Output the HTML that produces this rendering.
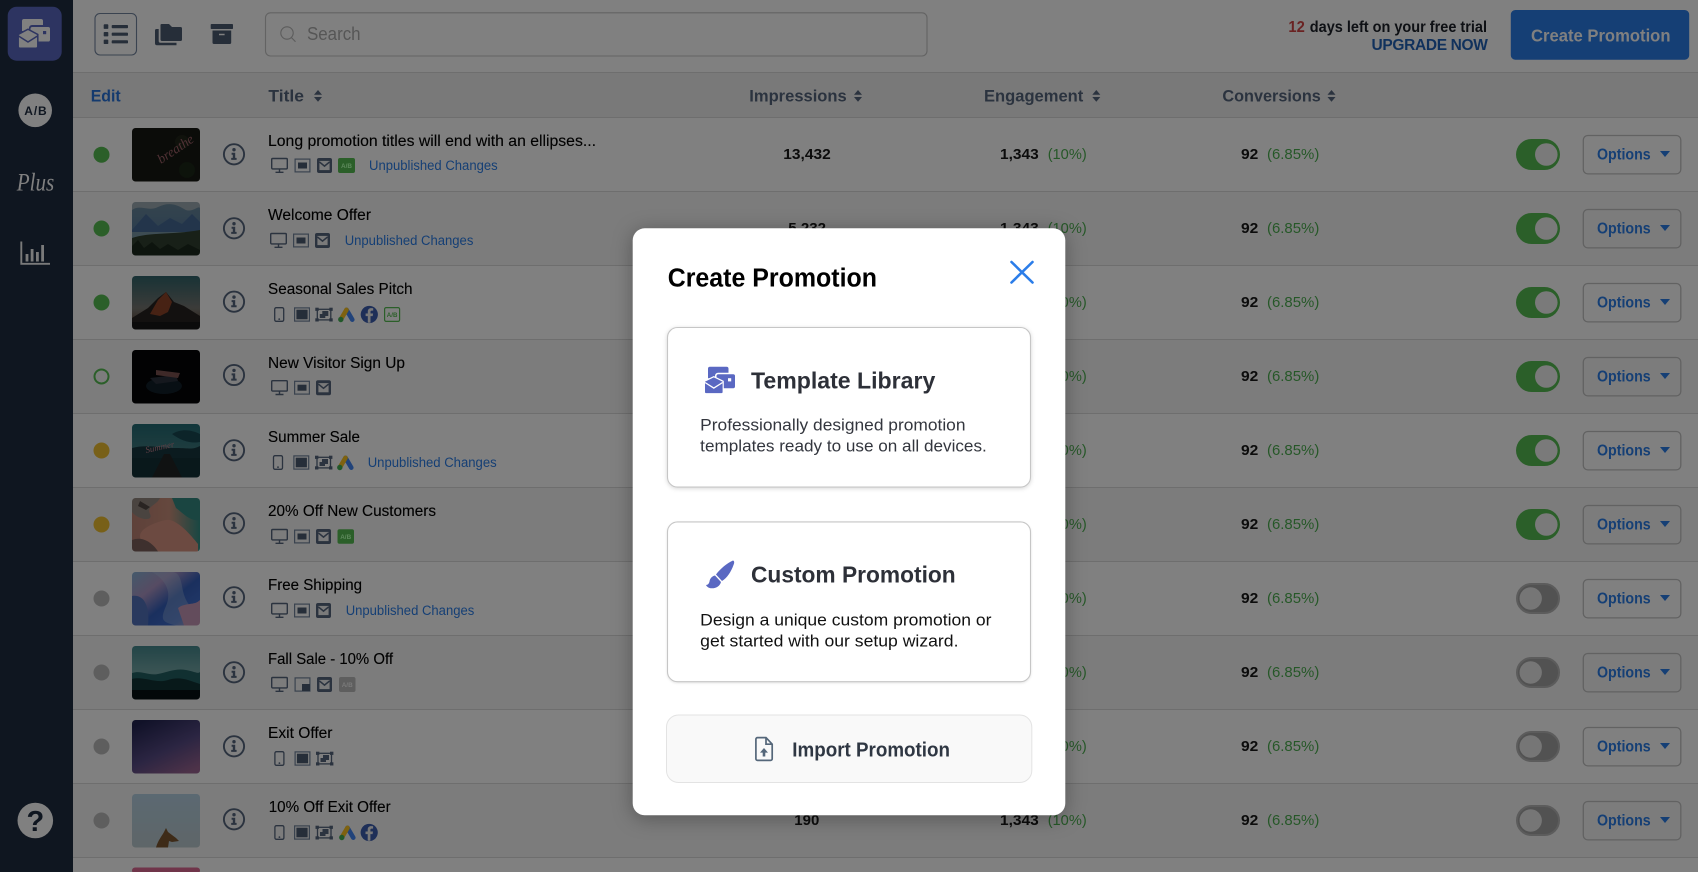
<!DOCTYPE html>
<html lang="en">
<head>
<meta charset="utf-8">
<title>Create Promotion</title>
<style>
html,body{margin:0;padding:0;width:1698px;height:872px;overflow:hidden;background:#808080}
svg{display:block}
text{font-family:"Liberation Sans",Arial,sans-serif}
g[clip-path]{filter:brightness(.56)}
.ti{font-size:15.5px;fill:#000;stroke:#000;stroke-width:.12px;transform:translateY(-.5px)}
.un{font-size:13.5px;fill:#153f75}
.hd{font-size:16.5px;font-weight:700;fill:#2b333f}
.nm{font-size:15px;font-weight:700;fill:#0c0c0c}
.gr{font-size:15px;fill:#265828}
.op{font-size:15.5px;font-weight:700;fill:#153f75;transform:translateY(-.8px)}
.ab{font-size:6.5px;font-weight:700}
.mh{font-size:23.5px;font-weight:700;fill:#2d3038}
.md{font-size:17px;fill:#33363e;transform:translateX(-.5px)}
</style>
</head>
<body>
<svg xmlns="http://www.w3.org/2000/svg" width="1698" height="872" viewBox="0 0 1698 872">
<defs>
<clipPath id="tc"><rect width="68" height="53.5" rx="3.5"/></clipPath>
<linearGradient id="g1" x1="0" y1="0" x2="0" y2="1"><stop offset="0" stop-color="#5f7a8c"/><stop offset=".5" stop-color="#50708c"/><stop offset="1" stop-color="#2a3c36"/></linearGradient>
<linearGradient id="g2" x1="0" y1="0" x2="0" y2="1"><stop offset="0" stop-color="#2c5a60"/><stop offset=".6" stop-color="#6a6a66"/><stop offset="1" stop-color="#4a3020"/></linearGradient>
<linearGradient id="g4" x1="0" y1="0" x2="0" y2="1"><stop offset="0" stop-color="#1f6068"/><stop offset=".55" stop-color="#3a6e72"/><stop offset="1" stop-color="#12363c"/></linearGradient>
<linearGradient id="g5" x1="0" y1="0" x2="1" y2="0"><stop offset="0" stop-color="#a87468"/><stop offset=".55" stop-color="#b5806e"/><stop offset="1" stop-color="#2c7e76"/></linearGradient>
<linearGradient id="g6" x1="0" y1="0" x2="1" y2="1"><stop offset="0" stop-color="#7aa0c0"/><stop offset=".3" stop-color="#9a86b0"/><stop offset=".55" stop-color="#2f55a8"/><stop offset=".8" stop-color="#3a62b8"/><stop offset="1" stop-color="#b884a4"/></linearGradient>
<linearGradient id="g7" x1="0" y1="0" x2="0" y2="1"><stop offset="0" stop-color="#3e7c80"/><stop offset=".5" stop-color="#6a9696"/><stop offset="1" stop-color="#2a5a5c"/></linearGradient>
<linearGradient id="g8" x1=".2" y1="0" x2=".8" y2="1"><stop offset="0" stop-color="#1e2048"/><stop offset=".55" stop-color="#4d4276"/><stop offset="1" stop-color="#8a5a82"/></linearGradient>
<linearGradient id="g9" x1="0" y1="0" x2="0" y2="1"><stop offset="0" stop-color="#a3bbcb"/><stop offset="1" stop-color="#a8b6ba"/></linearGradient>
<g id="mon" fill="none" stroke="#2b333f" stroke-width="1.4"><rect x=".7" y="-7" width="15.6" height="10.4" rx="1"/><path d="M8.5 3.5V6.5M4.5 6.8H12.5"/></g>
<g id="sq"><rect x=".6" y="-6.4" width="14.8" height="12.8" fill="none" stroke="#3a434f" stroke-width="1.2"/><rect x="3.5" y="-3" width="9" height="6" fill="#262e39"/></g>
<g id="fs"><rect x=".6" y="-6.6" width="14.8" height="13.2" fill="none" stroke="#3a434f" stroke-width="1.2"/><rect x="2.4" y="-4.8" width="11.2" height="9.6" fill="#262e39"/></g>
<g id="cs"><rect x=".6" y="-6.6" width="14.8" height="13.2" fill="none" stroke="#3a434f" stroke-width="1.2"/><rect x="7.5" y="-.5" width="8" height="7" fill="#262e39"/></g>
<g id="env"><rect y="-7.5" width="15" height="15" rx="2" fill="#2b333f"/><rect x="2.4" y="-4.6" width="10.2" height="9.2" fill="#7a7a7a"/><path d="M2.4-3.6 7.5 .6 12.6-3.6" fill="none" stroke="#2b333f" stroke-width="1.5"/></g>
<g id="ph"><rect x=".7" y="-6.8" width="9" height="13.6" rx="1.5" fill="none" stroke="#2b333f" stroke-width="1.3"/><circle cx="5.2" cy="4.6" r=".9" fill="#2b333f"/></g>
<g id="ex"><rect x="2" y="-5.2" width="13.5" height="10.6" fill="none" stroke="#2b333f" stroke-width="1.3"/><rect x="0" y="-6.8" width="3.4" height="3.2" fill="#2b333f"/><rect x="14" y="-6.8" width="3.4" height="3.2" fill="#2b333f"/><rect x="0" y="3.8" width="3.4" height="3.2" fill="#2b333f"/><rect x="14" y="3.8" width="3.4" height="3.2" fill="#2b333f"/><path d="M7-3.5H13V1.5H10V3.5H4.5V-.5H7Z" fill="#2b333f"/></g>
<g id="ads"><path d="M8.5-4.7 14.3 5.2" stroke="#21437a" stroke-width="4.6" stroke-linecap="round" fill="none"/><path d="M8.5-4.7 3.5 3.8" stroke="#7e6210" stroke-width="4.6" stroke-linecap="round" fill="none"/><circle cx="2.8" cy="5" r="2.7" fill="#22582a"/></g>
<g id="fb"><circle cx="8.6" cy="0" r="8.6" fill="#1e2f58"/><path d="M9.8 8.2V1.6H12L12.4-1H9.8V-2.6C9.8-3.4 10-3.9 11.1-3.9H12.5V-6.3C12.2-6.3 11.4-6.4 10.5-6.4 8.5-6.4 7.1-5.2 7.1-3V-1H4.9V1.6H7.1V8.2Z" fill="#787878"/></g>
<g id="sort" fill="#2b333f"><path d="M0 4.7 4 0 8 4.7ZM0 7H8L4 11.7Z"/></g>
<g id="info"><circle r="10.1" fill="none" stroke="#2b333f" stroke-width="1.9"/><circle cy="-4.6" r="1.7" fill="#2b333f"/><path d="M-2.4-1.6H1.2V3.6H2.6V5.6H-2.8V3.6H-1.2V.4H-2.4Z" fill="#2b333f"/></g>
<g id="on"><rect x="1516" y="21.5" width="44" height="31" rx="15.5" fill="#2b5f29"/><circle cx="1546.3" cy="37" r="11.3" fill="#7a7a7a"/></g>
<g id="off"><rect x="1517" y="22.5" width="42" height="29" rx="14.5" fill="#525252" stroke="#5c5c5c" stroke-width="2"/><circle cx="1530.7" cy="37" r="11.2" fill="#767676"/></g>
<g id="btn"><rect x="1583.3" y="18" width="97.5" height="38.4" rx="4.5" fill="none" stroke="#626262" stroke-width="1.3"/><path d="M1660 33.5H1670L1665 39.5Z" fill="#153f75"/></g>
</defs>

<!-- page background -->
<rect width="1698" height="872" fill="#808080"/>
<rect x="73" y="72" width="1625" height="45.5" fill="#797979"/>
<rect x="73" y="191.5" width="1625" height="74" fill="#7c7c7c"/>
<rect x="73" y="339.5" width="1625" height="74" fill="#7c7c7c"/>
<rect x="73" y="487.5" width="1625" height="74" fill="#7c7c7c"/>
<rect x="73" y="635.5" width="1625" height="74" fill="#7c7c7c"/>
<rect x="73" y="783.5" width="1625" height="74" fill="#7c7c7c"/>
<g stroke="#6e6e6e" stroke-width="1">
<path d="M73 72.5H1698M73 117.5H1698M73 191.5H1698M73 265.5H1698M73 339.5H1698M73 413.5H1698M73 487.5H1698M73 561.5H1698M73 635.5H1698M73 709.5H1698M73 783.5H1698M73 857.5H1698"/>
</g>

<!-- sidebar -->
<rect width="73" height="872" fill="#0f1620"/>
<rect x="7.7" y="6.7" width="54" height="54" rx="9" fill="#2d3461"/>
<g transform="translate(19,19)">
<path d="M5 0H22a2 2 0 0 1 2 2V6H13a3 3 0 0 0-3 3v3H3V2A2 2 0 0 1 5 0Z" fill="#808080"/>
<rect x="11.5" y="8" width="19.5" height="14.5" rx="1.8" fill="#808080"/>
<rect x="24" y="12" width="3.2" height="3.2" fill="#2d3461"/>
<path d="M-.8 15.4 9 10.2 18.8 15.4V27.5a1.7 1.7 0 0 1-1.7 1.7H.9A1.7 1.7 0 0 1-.8 27.5Z" fill="#808080" stroke="#2d3461" stroke-width="1.5"/>
<path d="M-.5 17 9 23 18.5 17" fill="none" stroke="#2d3461" stroke-width="1.5"/>
</g>
<circle cx="35.2" cy="110.3" r="16.8" fill="#808080"/>
<text x="24.3" y="115" style="font-size:12px;font-weight:700;fill:#0f1620" textLength="22.4" lengthAdjust="spacing">A/B</text>
<text x="16.7" y="190.5" style="font-family:'Liberation Serif',serif;font-style:italic;font-size:25px;fill:#808080" textLength="37.6" lengthAdjust="spacingAndGlyphs">Plus</text>
<g fill="none" stroke="#7a7a7a" stroke-width="1.9"><path d="M21.3 241.5V263.8H50"/></g>
<g fill="#7a7a7a"><rect x="25.6" y="254" width="2.8" height="7.5"/><rect x="30.7" y="249" width="2.8" height="12.5"/><rect x="36" y="252" width="2.8" height="9.5"/><rect x="41.2" y="245" width="2.8" height="16.5"/></g>
<circle cx="35.3" cy="820.5" r="17.8" fill="#808080"/>
<text x="35.3" y="831" text-anchor="middle" style="font-size:29px;font-weight:700;fill:#0f1620">?</text>

<!-- top bar -->
<rect x="95" y="13.5" width="41.5" height="41.5" rx="5" fill="none" stroke="#3a4350" stroke-width="1.1"/>
<g fill="#262e39">
<rect x="103.7" y="24.3" width="4.6" height="4.6" rx=".8"/><rect x="103.7" y="32" width="4.6" height="4.4" rx=".8"/><rect x="103.7" y="39.6" width="4.6" height="4.4" rx=".8"/>
<rect x="111.7" y="25" width="16.3" height="3.2" rx=".8"/><rect x="111.7" y="32.6" width="16.3" height="3.2" rx=".8"/><rect x="111.7" y="40.2" width="16.3" height="3.2" rx=".8"/>
<path d="M161.5 24H169L172 27H180.5A1.5 1.5 0 0 1 182 28.5V39.5A1.5 1.5 0 0 1 180.5 41H162A1.5 1.5 0 0 1 160.5 39.5V25A1 1 0 0 1 161.5 24Z"/>
<path d="M155 30.5A1.5 1.5 0 0 1 156.5 29H158.7V41A1.8 1.8 0 0 0 160.5 42.8H176.5V45.2H157A2 2 0 0 1 155 43.2Z"/>
<rect x="210.7" y="24" width="22.3" height="5" rx=".8"/>
<path d="M212.5 30.5H231.2V42.5A1.5 1.5 0 0 1 229.7 44H214A1.5 1.5 0 0 1 212.5 42.5ZM219 33.8V35.2H224.6V33.8Z" fill-rule="evenodd"/>
</g>
<rect x="265.5" y="12.8" width="661.5" height="43.2" rx="5" fill="none" stroke="#636363" stroke-width="1.1"/>
<circle cx="287" cy="33" r="6.2" fill="none" stroke="#5c5c5c" stroke-width="1.1"/><path d="M291.5 37.6 295.5 41.8" stroke="#5c5c5c" stroke-width="1.1"/>
<text x="307" y="40" style="font-size:18px;fill:#565656" textLength="53.6" lengthAdjust="spacingAndGlyphs">Search</text>
<text x="1288.4" y="32" style="font-size:15.5px;font-weight:700;fill:#6a2222" textLength="16.4" lengthAdjust="spacingAndGlyphs">12</text>
<text x="1309.8" y="32" style="font-size:15.5px;font-weight:700;fill:#0e1014" textLength="177.2" lengthAdjust="spacingAndGlyphs">days left on your free trial</text>
<text x="1371.5" y="50" style="font-size:15.5px;font-weight:700;fill:#10315c" textLength="116.4" lengthAdjust="spacing">UPGRADE NOW</text>
<rect x="1510.8" y="10" width="178.4" height="49.7" rx="4.5" fill="#153f75"/>
<text x="1531" y="41.3" style="font-size:17.5px;font-weight:700;fill:#808080" textLength="139.5" lengthAdjust="spacingAndGlyphs">Create Promotion</text>

<!-- table header -->
<text x="90.7" y="101.6" style="font-size:17px;font-weight:700;fill:#143a6e" textLength="30" lengthAdjust="spacingAndGlyphs">Edit</text>
<text x="268.4" y="101.6" class="hd" textLength="35.6" lengthAdjust="spacingAndGlyphs">Title</text>
<use href="#sort" x="314" y="90"/>
<text x="749.3" y="101.6" class="hd" textLength="97.4" lengthAdjust="spacingAndGlyphs">Impressions</text>
<use href="#sort" x="854" y="90"/>
<text x="984" y="101.6" class="hd" textLength="99.3" lengthAdjust="spacingAndGlyphs">Engagement</text>
<use href="#sort" x="1092.3" y="90"/>
<text x="1222.4" y="101.6" class="hd" textLength="98.4" lengthAdjust="spacingAndGlyphs">Conversions</text>
<use href="#sort" x="1327.5" y="90"/>

<!-- row 0 -->
<g transform="translate(0,117.5)">
<circle cx="101.5" cy="37.2" r="8" fill="#2b5f29"/>
<g transform="translate(132,10.5)" clip-path="url(#tc)"><rect width="68" height="53.5" fill="#141510"/><circle cx="50" cy="14" r="7" fill="#1c2016"/><circle cx="55" cy="42" r="8" fill="#172213"/><text x="0" y="0" transform="translate(29,36) rotate(-34)" style="font-family:'Liberation Serif',serif;font-style:italic;font-size:13.5px;fill:#8f585e">breathe</text></g>
<use href="#info" x="234" y="36.8"/>
<text x="268" y="29" class="ti" textLength="328" lengthAdjust="spacingAndGlyphs">Long promotion titles will end with an ellipses...</text>
<g transform="translate(0,48)"><use href="#mon" x="271"/><use href="#sq" x="294.5"/><use href="#env" x="317"/><rect x="338" y="-7.5" width="17" height="15" rx="2" fill="#2b5f29"/><text x="341" y="2.3" class="ab" style="fill:#5e8a5c" textLength="11" lengthAdjust="spacingAndGlyphs">A/B</text><text x="369" y="4.7" class="un" textLength="128.7" lengthAdjust="spacingAndGlyphs">Unpublished Changes</text></g>
<text x="783.3" y="41.3" class="nm" textLength="47.4" lengthAdjust="spacingAndGlyphs">13,432</text>
<text x="1000" y="41.3" class="nm" textLength="38.7" lengthAdjust="spacingAndGlyphs">1,343</text><text x="1047.7" y="41.3" class="gr" textLength="39" lengthAdjust="spacingAndGlyphs">(10%)</text>
<text x="1241" y="41.3" class="nm" textLength="17.3" lengthAdjust="spacingAndGlyphs">92</text><text x="1267" y="41.3" class="gr" textLength="52.3" lengthAdjust="spacingAndGlyphs">(6.85%)</text>
<use href="#on"/><use href="#btn"/><text x="1597" y="42.8" class="op" textLength="53.7" lengthAdjust="spacingAndGlyphs">Options</text>
</g>

<!-- row 1 -->
<g transform="translate(0,191.5)">
<circle cx="101.5" cy="37" r="8" fill="#2b5f29"/>
<g transform="translate(132,10.5)" clip-path="url(#tc)"><rect width="68" height="53.5" fill="url(#g1)"/><path d="M0 8C8 2 16 10 26 5S44 2 52 7 66 3 68 6V0H0Z" fill="#8d9aa0"/><path d="M0 28 14 12 26 24 38 16 50 22 60 12 68 20V40H0Z" fill="#3e5f86"/><path d="M0 30H68V36H0Z" fill="#6d8895"/><path d="M0 36C18 30 40 33 68 28V53.5H0Z" fill="#2b3a2a"/><path d="M0 53.5V44L6 38 12 46 20 40 28 47 36 42 46 48 56 42 68 48V53.5Z" fill="#182419"/></g>
<use href="#info" x="234" y="36.8"/>
<text x="268" y="29" class="ti" textLength="103" lengthAdjust="spacingAndGlyphs">Welcome Offer</text>
<g transform="translate(0,49)"><use href="#mon" x="270"/><use href="#sq" x="293"/><use href="#env" x="315"/><text x="344.7" y="4.7" class="un" textLength="128.7" lengthAdjust="spacingAndGlyphs">Unpublished Changes</text></g>
<text x="788.3" y="41.3" class="nm" textLength="37.7" lengthAdjust="spacingAndGlyphs">5,232</text>
<text x="1000" y="41.3" class="nm" textLength="38.7" lengthAdjust="spacingAndGlyphs">1,343</text><text x="1047.7" y="41.3" class="gr" textLength="39" lengthAdjust="spacingAndGlyphs">(10%)</text>
<text x="1241" y="41.3" class="nm" textLength="17.3" lengthAdjust="spacingAndGlyphs">92</text><text x="1267" y="41.3" class="gr" textLength="52.3" lengthAdjust="spacingAndGlyphs">(6.85%)</text>
<use href="#on"/><use href="#btn"/><text x="1597" y="42.8" class="op" textLength="53.7" lengthAdjust="spacingAndGlyphs">Options</text>
</g>

<!-- row 2 -->
<g transform="translate(0,265.5)">
<circle cx="101.5" cy="37" r="8" fill="#2b5f29"/>
<g transform="translate(132,10.5)" clip-path="url(#tc)"><rect width="68" height="53.5" fill="url(#g2)"/><path d="M0 42 16 32 26 22 34 16 42 26 52 30 68 40V53.5H0Z" fill="#221e1c"/><path d="M26 24 34 16 40 26 36 36 28 40 18 38Z" fill="#7f3c24"/><rect y="46" width="68" height="8" fill="#141414"/></g>
<use href="#info" x="234" y="36.2"/>
<text x="268" y="29" class="ti" textLength="144.5" lengthAdjust="spacingAndGlyphs">Seasonal Sales Pitch</text>
<g transform="translate(0,49)"><use href="#ph" x="274"/><use href="#fs" x="294"/><use href="#ex" x="315.3"/><use href="#ads" x="338"/><use href="#fb" x="360.7"/><rect x="384.6" y="-6.9" width="15" height="13.8" rx="1.5" fill="none" stroke="#2b5f29" stroke-width="1.2"/><text x="386.8" y="2.3" class="ab" style="fill:#2b5f29" textLength="10.6" lengthAdjust="spacingAndGlyphs">A/B</text></g>
<text x="1000" y="41.3" class="nm" textLength="38.7" lengthAdjust="spacingAndGlyphs">1,343</text><text x="1047.7" y="41.3" class="gr" textLength="39" lengthAdjust="spacingAndGlyphs">(10%)</text>
<text x="1241" y="41.3" class="nm" textLength="17.3" lengthAdjust="spacingAndGlyphs">92</text><text x="1267" y="41.3" class="gr" textLength="52.3" lengthAdjust="spacingAndGlyphs">(6.85%)</text>
<use href="#on"/><use href="#btn"/><text x="1597" y="42.8" class="op" textLength="53.7" lengthAdjust="spacingAndGlyphs">Options</text>
</g>

<!-- row 3 -->
<g transform="translate(0,339.5)">
<circle cx="101.5" cy="37" r="7" fill="none" stroke="#2b5f29" stroke-width="2"/>
<g transform="translate(132,10.5)" clip-path="url(#tc)"><rect width="68" height="53.5" fill="#030305"/><ellipse cx="32" cy="36" rx="18" ry="8" fill="#0e1a24"/><path d="M18 28 44 25 46 31 24 34Z" fill="#252b36"/><path d="M24 20 48 23 46 28 24 25Z" fill="#6e4a48"/></g>
<use href="#info" x="234" y="35.5"/>
<text x="268" y="29" class="ti" textLength="137" lengthAdjust="spacingAndGlyphs">New Visitor Sign Up</text>
<g transform="translate(0,48.2)"><use href="#mon" x="271"/><use href="#sq" x="294"/><use href="#env" x="316"/></g>
<text x="1000" y="41.3" class="nm" textLength="38.7" lengthAdjust="spacingAndGlyphs">1,343</text><text x="1047.7" y="41.3" class="gr" textLength="39" lengthAdjust="spacingAndGlyphs">(10%)</text>
<text x="1241" y="41.3" class="nm" textLength="17.3" lengthAdjust="spacingAndGlyphs">92</text><text x="1267" y="41.3" class="gr" textLength="52.3" lengthAdjust="spacingAndGlyphs">(6.85%)</text>
<use href="#on"/><use href="#btn"/><text x="1597" y="42.8" class="op" textLength="53.7" lengthAdjust="spacingAndGlyphs">Options</text>
</g>

<!-- row 4 -->
<g transform="translate(0,413.5)">
<circle cx="101.5" cy="37" r="8" fill="#786018"/>
<g transform="translate(132,10.5)" clip-path="url(#tc)"><rect width="68" height="53.5" fill="url(#g4)"/><path d="M40 10C50 4 60 6 68 10V18C58 20 48 16 40 10Z" fill="#15404a"/><path d="M0 24C14 20 30 24 44 24S60 26 68 22V34H0Z" fill="#143038"/><rect y="34" width="68" height="20" fill="#102a30"/><path d="M32 30H38L50 53.5H20Z" fill="#1c2020"/><text transform="translate(14,29) rotate(-12)" style="font-family:'Liberation Serif',serif;font-style:italic;font-size:9px;fill:#a8707c">Summer</text></g>
<use href="#info" x="234" y="36.8"/>
<text x="268" y="29" class="ti" textLength="92" lengthAdjust="spacingAndGlyphs">Summer Sale</text>
<g transform="translate(0,49)"><use href="#ph" x="272.8"/><use href="#fs" x="293.3"/><use href="#ex" x="315"/><use href="#ads" x="337"/><text x="367.7" y="4.7" class="un" textLength="129" lengthAdjust="spacingAndGlyphs">Unpublished Changes</text></g>
<text x="1000" y="41.3" class="nm" textLength="38.7" lengthAdjust="spacingAndGlyphs">1,343</text><text x="1047.7" y="41.3" class="gr" textLength="39" lengthAdjust="spacingAndGlyphs">(10%)</text>
<text x="1241" y="41.3" class="nm" textLength="17.3" lengthAdjust="spacingAndGlyphs">92</text><text x="1267" y="41.3" class="gr" textLength="52.3" lengthAdjust="spacingAndGlyphs">(6.85%)</text>
<use href="#on"/><use href="#btn"/><text x="1597" y="42.8" class="op" textLength="53.7" lengthAdjust="spacingAndGlyphs">Options</text>
</g>

<!-- row 5 -->
<g transform="translate(0,487.5)">
<circle cx="101.5" cy="37" r="8" fill="#786018"/>
<g transform="translate(132,10.5)" clip-path="url(#tc)"><rect width="68" height="53.5" fill="url(#g5)"/><path d="M0 0H28C24 8 14 8 18 16S6 22 0 14Z" fill="#857a72"/><path d="M8 3 18 9 14 12 6 8Z" fill="#4a403c"/><path d="M34 22C44 20 58 36 66 46V53.5H30C18 53.5 8 46 8 38S24 24 34 22Z" fill="#c08474"/><path d="M0 42C10 38 20 44 26 53.5H0Z" fill="#6e5652"/><path d="M40 0H68V22C58 24 50 14 44 10Z" fill="#2f7c74"/></g>
<use href="#info" x="234" y="35.8"/>
<text x="268" y="29" class="ti" textLength="168" lengthAdjust="spacingAndGlyphs">20% Off New Customers</text>
<g transform="translate(0,49)"><use href="#mon" x="271"/><use href="#sq" x="294"/><use href="#env" x="316"/><rect x="337.5" y="-7.3" width="16.5" height="14.6" rx="2" fill="#2b5f29"/><text x="340.2" y="2.3" class="ab" style="fill:#5e8a5c" textLength="11" lengthAdjust="spacingAndGlyphs">A/B</text></g>
<text x="1000" y="41.3" class="nm" textLength="38.7" lengthAdjust="spacingAndGlyphs">1,343</text><text x="1047.7" y="41.3" class="gr" textLength="39" lengthAdjust="spacingAndGlyphs">(10%)</text>
<text x="1241" y="41.3" class="nm" textLength="17.3" lengthAdjust="spacingAndGlyphs">92</text><text x="1267" y="41.3" class="gr" textLength="52.3" lengthAdjust="spacingAndGlyphs">(6.85%)</text>
<use href="#on"/><use href="#btn"/><text x="1597" y="42.8" class="op" textLength="53.7" lengthAdjust="spacingAndGlyphs">Options</text>
</g>

<!-- row 6 -->
<g transform="translate(0,561.5)">
<circle cx="101.5" cy="37" r="8" fill="#5e5e5e"/>
<g transform="translate(132,10.5)" clip-path="url(#tc)"><rect width="68" height="53.5" fill="url(#g6)"/><path d="M20 0C34 8 40 20 34 34S30 50 44 53.5H68V40C56 36 52 26 50 14S44 0 40 0Z" fill="#9db2cc" opacity=".35"/><path d="M0 24C12 22 18 34 16 53.5H0Z" fill="#4a66a8"/><path d="M46 36C54 30 62 34 68 28V53.5H52Z" fill="#b088a4"/></g>
<use href="#info" x="234" y="35.8"/>
<text x="268" y="29" class="ti" textLength="94" lengthAdjust="spacingAndGlyphs">Free Shipping</text>
<g transform="translate(0,49)"><use href="#mon" x="271"/><use href="#sq" x="294"/><use href="#env" x="316"/><text x="345.7" y="4.7" class="un" textLength="128.6" lengthAdjust="spacingAndGlyphs">Unpublished Changes</text></g>
<text x="1000" y="41.3" class="nm" textLength="38.7" lengthAdjust="spacingAndGlyphs">1,343</text><text x="1047.7" y="41.3" class="gr" textLength="39" lengthAdjust="spacingAndGlyphs">(10%)</text>
<text x="1241" y="41.3" class="nm" textLength="17.3" lengthAdjust="spacingAndGlyphs">92</text><text x="1267" y="41.3" class="gr" textLength="52.3" lengthAdjust="spacingAndGlyphs">(6.85%)</text>
<use href="#off"/><use href="#btn"/><text x="1597" y="42.8" class="op" textLength="53.7" lengthAdjust="spacingAndGlyphs">Options</text>
</g>

<!-- row 7 -->
<g transform="translate(0,635.5)">
<circle cx="101.5" cy="37" r="8" fill="#5e5e5e"/>
<g transform="translate(132,10.5)" clip-path="url(#tc)"><rect width="68" height="53.5" fill="url(#g7)"/><path d="M0 27C10 24 16 30 26 28S44 22 54 24 66 28 68 26V53.5H0Z" fill="#1f5558"/><path d="M0 33C12 30 24 38 36 34S56 34 68 38V53.5H0Z" fill="#0e2c2e"/><rect y="44" width="68" height="10" fill="#060f10"/></g>
<use href="#info" x="234" y="36.8"/>
<text x="268" y="29" class="ti" textLength="125" lengthAdjust="spacingAndGlyphs">Fall Sale - 10% Off</text>
<g transform="translate(0,49)"><use href="#mon" x="271"/><use href="#cs" x="294.5"/><use href="#env" x="317"/><rect x="339" y="-7.5" width="16.5" height="15" rx="2" fill="#5e5e5e"/><text x="341.7" y="2.3" class="ab" style="fill:#7a7a7a" textLength="11" lengthAdjust="spacingAndGlyphs">A/B</text></g>
<text x="1000" y="41.3" class="nm" textLength="38.7" lengthAdjust="spacingAndGlyphs">1,343</text><text x="1047.7" y="41.3" class="gr" textLength="39" lengthAdjust="spacingAndGlyphs">(10%)</text>
<text x="1241" y="41.3" class="nm" textLength="17.3" lengthAdjust="spacingAndGlyphs">92</text><text x="1267" y="41.3" class="gr" textLength="52.3" lengthAdjust="spacingAndGlyphs">(6.85%)</text>
<use href="#off"/><use href="#btn"/><text x="1597" y="42.8" class="op" textLength="53.7" lengthAdjust="spacingAndGlyphs">Options</text>
</g>

<!-- row 8 -->
<g transform="translate(0,709.5)">
<circle cx="101.5" cy="37" r="8" fill="#5e5e5e"/>
<g transform="translate(132,10.5)" clip-path="url(#tc)"><rect width="68" height="53.5" fill="url(#g8)"/></g>
<use href="#info" x="234" y="36.8"/>
<text x="268" y="29" class="ti" textLength="64.5" lengthAdjust="spacingAndGlyphs">Exit Offer</text>
<g transform="translate(0,49)"><use href="#ph" x="274.2"/><use href="#fs" x="294.5"/><use href="#ex" x="316"/></g>
<text x="1000" y="41.3" class="nm" textLength="38.7" lengthAdjust="spacingAndGlyphs">1,343</text><text x="1047.7" y="41.3" class="gr" textLength="39" lengthAdjust="spacingAndGlyphs">(10%)</text>
<text x="1241" y="41.3" class="nm" textLength="17.3" lengthAdjust="spacingAndGlyphs">92</text><text x="1267" y="41.3" class="gr" textLength="52.3" lengthAdjust="spacingAndGlyphs">(6.85%)</text>
<use href="#off"/><use href="#btn"/><text x="1597" y="42.8" class="op" textLength="53.7" lengthAdjust="spacingAndGlyphs">Options</text>
</g>

<!-- row 9 -->
<g transform="translate(0,783.5)">
<circle cx="101.5" cy="37" r="8" fill="#5e5e5e"/>
<g transform="translate(132,10.5)" clip-path="url(#tc)"><rect width="68" height="53.5" fill="url(#g9)"/><path d="M24 53.5C26 46 30 42 32 38L34 34 36 38 44 44 47 47 40 48 37 47 36 53.5Z" fill="#6e4c2a"/></g>
<use href="#info" x="234" y="35.8"/>
<text x="268.7" y="29" class="ti" textLength="122" lengthAdjust="spacingAndGlyphs">10% Off Exit Offer</text>
<g transform="translate(0,49)"><use href="#ph" x="274.2"/><use href="#fs" x="294"/><use href="#ex" x="315.5"/><use href="#ads" x="339"/><use href="#fb" x="360.6"/></g>
<text x="794.3" y="41.3" class="nm" textLength="25" lengthAdjust="spacingAndGlyphs">190</text>
<text x="1000" y="41.3" class="nm" textLength="38.7" lengthAdjust="spacingAndGlyphs">1,343</text><text x="1047.7" y="41.3" class="gr" textLength="39" lengthAdjust="spacingAndGlyphs">(10%)</text>
<text x="1241" y="41.3" class="nm" textLength="17.3" lengthAdjust="spacingAndGlyphs">92</text><text x="1267" y="41.3" class="gr" textLength="52.3" lengthAdjust="spacingAndGlyphs">(6.85%)</text>
<use href="#off"/><use href="#btn"/><text x="1597" y="42.8" class="op" textLength="53.7" lengthAdjust="spacingAndGlyphs">Options</text>
</g>

<!-- row 10 sliver -->
<rect x="132" y="867.5" width="68" height="6" rx="3" fill="#70354a"/>

<!-- modal -->
<rect x="632.7" y="228.3" width="432.6" height="587" rx="12" fill="#fff" style="filter:drop-shadow(0 3px 10px rgba(0,0,0,.3))"/>
<text x="667.7" y="286.7" style="font-size:25.5px;font-weight:700;fill:#000" textLength="209.3" lengthAdjust="spacingAndGlyphs">Create Promotion</text>
<path d="M1011.5 262 1032.5 282.5M1032.5 262 1011.5 282.5" stroke="#2b7de9" stroke-width="2.6" stroke-linecap="round" fill="none"/>

<rect x="667.5" y="327.5" width="363" height="159.6" rx="10" fill="#fff" stroke="#c6c6c6" stroke-width="1.1" style="filter:drop-shadow(0 1.5px 2px rgba(0,0,0,.16))"/>
<g transform="translate(705,366.7)">
<path d="M5 0H21.5a2 2 0 0 1 2 2V6H13a3 3 0 0 0-3 3v2.5H3V2A2 2 0 0 1 5 0Z" fill="#5a68c2"/>
<rect x="11.5" y="7.5" width="18.5" height="14" rx="1.8" fill="#5a68c2"/>
<rect x="23" y="11.5" width="3.2" height="3.2" fill="#fff"/>
<path d="M-.6 14.6 8.8 10 18.2 14.6V25.4a1.6 1.6 0 0 1-1.6 1.6H1A1.6 1.6 0 0 1-.6 25.4Z" fill="#5a68c2" stroke="#fff" stroke-width="1.2"/>
<path d="M0 15.8 8.8 21.4 17.6 15.8" fill="none" stroke="#fff" stroke-width="1.3"/>
</g>
<text x="751" y="388.3" class="mh" textLength="184.3" lengthAdjust="spacingAndGlyphs">Template Library</text>
<text x="700.7" y="430.7" class="md" textLength="265.3" lengthAdjust="spacingAndGlyphs">Professionally designed promotion</text>
<text x="700.7" y="451.7" class="md" textLength="286.6" lengthAdjust="spacingAndGlyphs">templates ready to use on all devices.</text>

<rect x="667.5" y="521.9" width="363" height="159.8" rx="10" fill="#fff" stroke="#c6c6c6" stroke-width="1.1" style="filter:drop-shadow(0 1px 1px rgba(0,0,0,.1))"/>
<path d="M733 560.5C734.5 561 734.5 563 733.5 565 731 572 727 578 722 581L716 574.5C720 569 727 563 733 560.5ZM715 575.5 721 582C720 586 716 588.5 711.5 588.3 709 588.2 707 587 706 585 708 585 709 583.5 709.5 581.5 710 578 712.5 576 715 575.5Z" fill="#5a68c2"/>
<text x="751" y="582.7" class="mh" textLength="204.7" lengthAdjust="spacingAndGlyphs">Custom Promotion</text>
<text x="700.7" y="625.7" class="md" style="fill:#111" textLength="291.3" lengthAdjust="spacingAndGlyphs">Design a unique custom promotion or</text>
<text x="700.7" y="646.7" class="md" style="fill:#111" textLength="258.3" lengthAdjust="spacingAndGlyphs">get started with our setup wizard.</text>

<rect x="666.5" y="715" width="365.3" height="67.5" rx="12" fill="#f9f9f9" stroke="#e3e3e3" stroke-width="1"/>
<path d="M757.5 737.6H766L772.2 744.2V758.8A1.6 1.6 0 0 1 770.6 760.4H757.5A1.6 1.6 0 0 1 755.9 758.8V739.2A1.6 1.6 0 0 1 757.5 737.6ZM766 737.6V744.2H772.2" fill="none" stroke="#55677a" stroke-width="1.7"/>
<path d="M764 748 768 752.6H765.3V756.5H762.7V752.6H760Z" fill="#55677a"/>
<text x="792.3" y="756.7" style="font-size:20px;font-weight:700;fill:#2f3743" textLength="157.7" lengthAdjust="spacingAndGlyphs">Import Promotion</text>
</svg>
</body>
</html>
